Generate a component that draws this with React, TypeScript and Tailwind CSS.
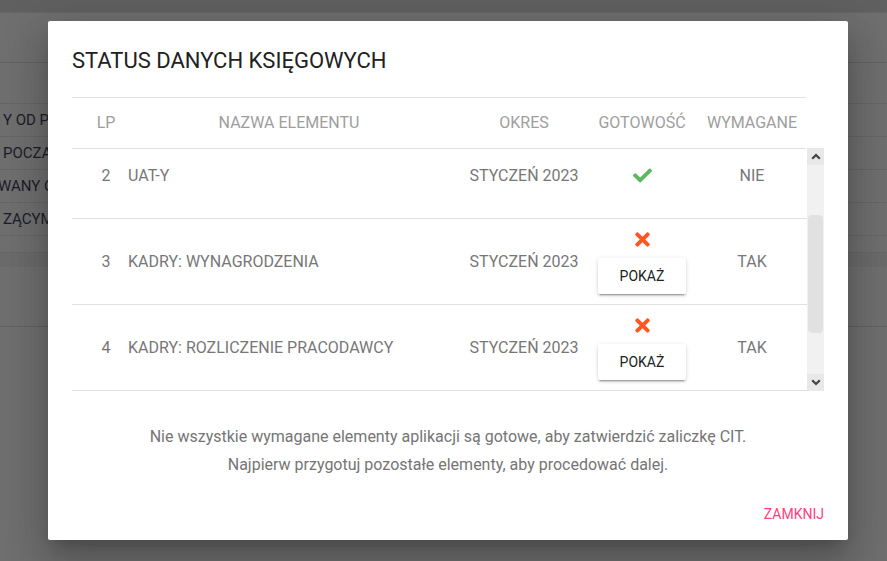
import { FaCheck, FaTimes } from "react-icons/fa";

type Row = {
  lp: number;
  name: string;
  period: string;
  ready: boolean;
  required: boolean;
};

const ROWS: Row[] = [
  { lp: 1, name: "KSIĘGA GŁÓWNA", period: "STYCZEŃ 2023", ready: true, required: true },
  { lp: 2, name: "UAT-Y", period: "STYCZEŃ 2023", ready: true, required: false },
  { lp: 3, name: "KADRY: WYNAGRODZENIA", period: "STYCZEŃ 2023", ready: false, required: true },
  { lp: 4, name: "KADRY: ROZLICZENIE PRACODAWCY", period: "STYCZEŃ 2023", ready: false, required: true },
  { lp: 5, name: "ŚRODKI TRWAŁE", period: "STYCZEŃ 2023", ready: true, required: false },
];

const GRID = "grid grid-cols-[56px_322px_148px_88px_120px]";

function Chevron({ up }: { up?: boolean }) {
  return (
    <svg width="10" height="7" viewBox="0 0 10 7" className={up ? "" : "rotate-180"}>
      <path d="M1.2 5.8 L5 2 L8.8 5.8" fill="none" stroke="#3f4447" strokeWidth="2.2" />
    </svg>
  );
}

// background page that sits under the dark overlay
function PageBehind() {
  const lines = ["Y OD POCZĄTKU ROKU", "POCZĄTKOWY", "WANY OKRES", "ZĄCYM OKRESIE"];
  return (
    <div className="h-[561px] w-full overflow-hidden bg-[#6f6f6f] font-['Roboto',sans-serif]">
      <div className="h-[13px] border-b border-[#666] bg-[#606060]" />
      <div className="h-[50px] border-b border-[#626262]" />
      <div className="h-[41px] border-b border-[#666]" />
      {lines.map((t, i) => (
        <div key={t} className="flex h-[33px] items-center border-b border-[#666]">
          <span className={`text-[15px] text-[#1d1d28] ${i === 2 ? "-ml-[2px]" : "ml-[3px]"}`}>{t}</span>
        </div>
      ))}
      <div className="h-[17px] border-b border-[#666]" />
      <div className="h-[14px] bg-[#6b6b6b]" />
      <div className="h-[60px] border-b border-[#626262]" />
    </div>
  );
}

export default function App() {
  return (
    <div className="relative h-[561px] w-[887px] overflow-hidden font-['Roboto',sans-serif]">
      <PageBehind />

      {/* Dialog */}
      <div className="absolute left-[48px] top-[21px] w-[800px] rounded-[2px] bg-white shadow-[0_11px_15px_-7px_rgba(0,0,0,0.2),0_24px_38px_3px_rgba(0,0,0,0.14),0_9px_46px_8px_rgba(0,0,0,0.12)]">
        <div className="px-6 pt-6">
          <h2 className="text-[22px] leading-[32px] text-[#212121]">STATUS DANYCH KSIĘGOWYCH</h2>

          {/* Table header */}
          <div className={`${GRID} mt-5 h-[52px] w-[734px] items-center border-y border-[#e0e0e0] text-[16px] text-[#9e9e9e]`}>
            <div className="pl-3 text-center">LP</div>
            <div className="text-center">NAZWA ELEMENTU</div>
            <div className="text-center">OKRES</div>
            <div className="text-center">GOTOWOŚĆ</div>
            <div className="pl-3 text-center">WYMAGANE</div>
          </div>

          {/* Table body */}
          <div className="flex h-[242px]">
            <div className="w-[735px] overflow-hidden">
              <div className="-mt-[102px]">
                {ROWS.map((r) => (
                  <div
                    key={r.lp}
                    className={`${GRID} h-[86px] items-center border-b border-[#e0e0e0] text-[16px] text-[#777]`}
                  >
                    <div className="pl-3 text-center">{r.lp}</div>
                    <div>{r.name}</div>
                    <div className="text-center">{r.period}</div>
                    <div className="flex flex-col items-center">
                      {r.ready ? (
                        <FaCheck className="text-[19px] text-[#5cb85c]" />
                      ) : (
                        <>
                          <FaTimes className="h-[21px] w-[21px] text-[#ff5722]" />
                          <button
                            type="button"
                            className="mt-[8px] h-9 w-[88px] rounded-[2px] bg-white text-[14px] font-normal text-[#212121] shadow-[0_3px_1px_-2px_rgba(0,0,0,0.2),0_2px_2px_0_rgba(0,0,0,0.14),0_1px_5px_0_rgba(0,0,0,0.12)]"
                          >
                            POKAŻ
                          </button>
                        </>
                      )}
                    </div>
                    <div className="pl-3 text-center">{r.required ? "TAK" : "NIE"}</div>
                  </div>
                ))}
              </div>
            </div>

            {/* Scrollbar */}
            <div className="-mt-px flex w-[17px] flex-col bg-[#f1f1f1]">
              <div className="flex h-[17px] items-center justify-center bg-[#e8e8e8]">
                <Chevron up />
              </div>
              <div className="h-[50px]" />
              <div className="mx-[1px] h-[118px] rounded-[4px] bg-[#e1e1e1]" />
              <div className="flex-1" />
              <div className="flex h-[17px] items-center justify-center bg-[#e8e8e8]">
                <Chevron />
              </div>
            </div>
          </div>

          {/* Message */}
          <div className="mt-8 text-center text-[16px] leading-[28px] text-[#757575]">
            <p>Nie wszystkie wymagane elementy aplikacji są gotowe, aby zatwierdzić zaliczkę CIT.</p>
            <p>Najpierw przygotuj pozostałe elementy, aby procedować dalej.</p>
          </div>
        </div>

        <div className="flex justify-end pb-2 pr-4 pt-[17px]">
          <button type="button" className="h-9 rounded-[2px] px-2 text-[14px] font-normal text-[#ff4081]">
            ZAMKNIJ
          </button>
        </div>
      </div>
    </div>
  );
}
